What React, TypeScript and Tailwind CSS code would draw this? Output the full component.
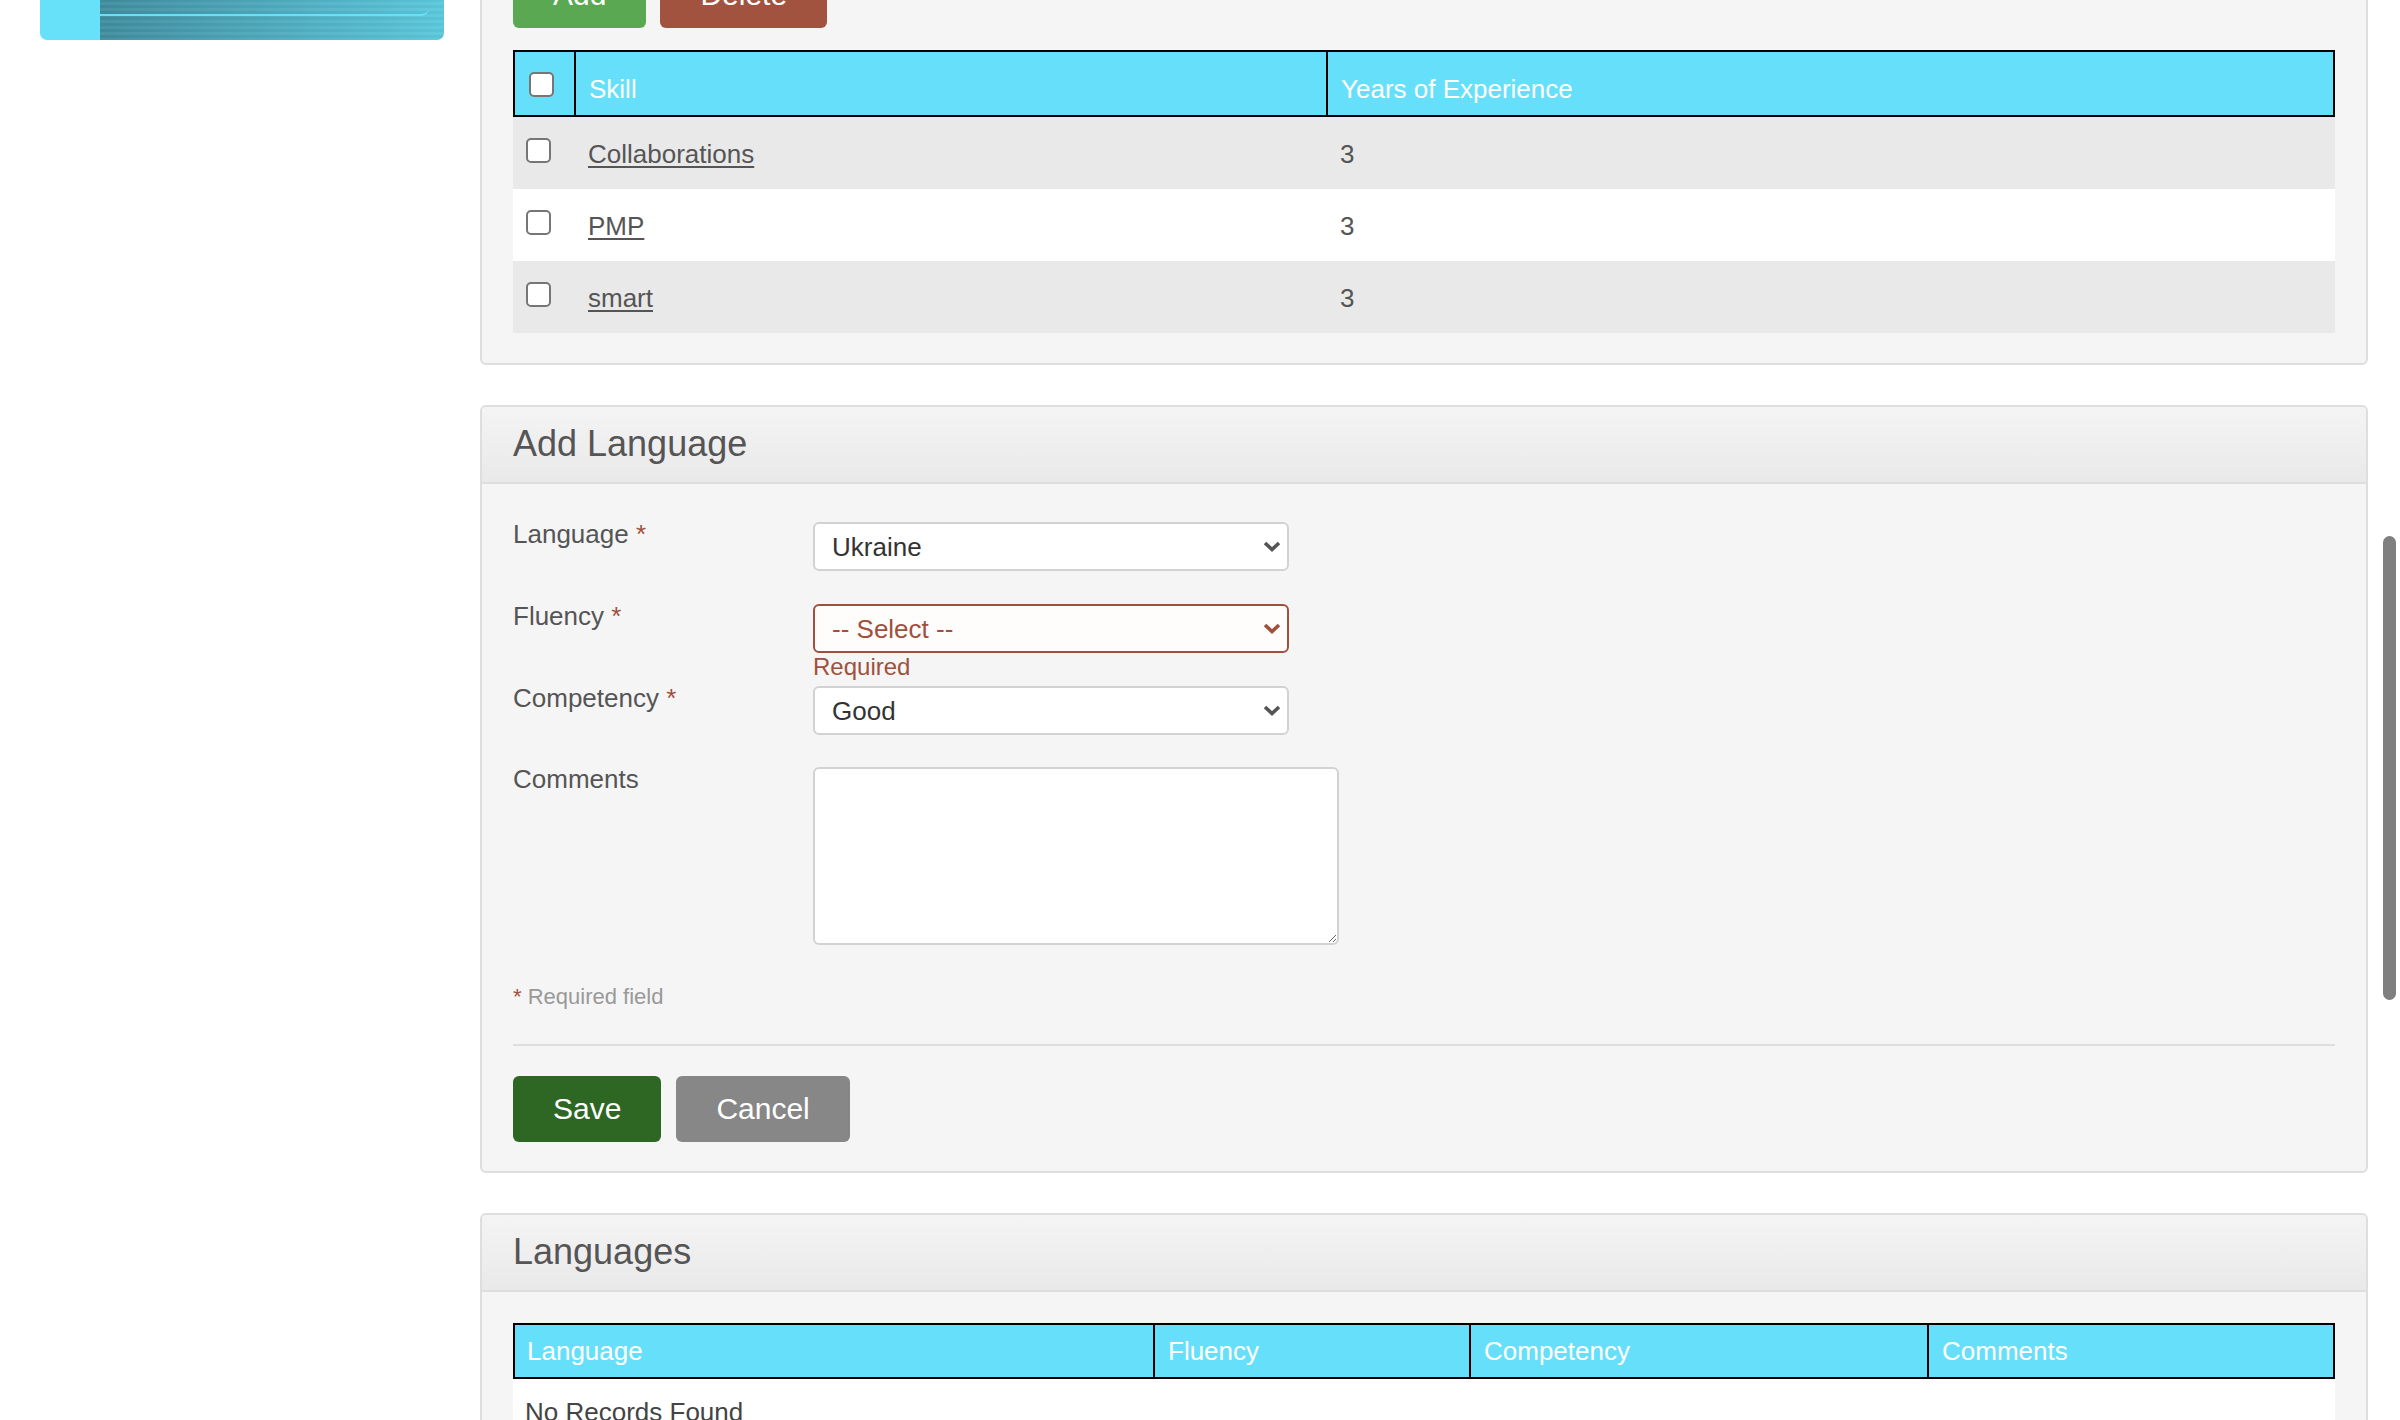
import React from "react";

const Checkbox = () => (
  <div className="w-[25px] h-[25px] bg-white border-2 border-[#767676] rounded-[5px] shrink-0" />
);

const Chevron = ({ color }: { color: string }) => (
  <svg width="18" height="11" viewBox="0 0 18 11" className="shrink-0">
    <path d="M2 2 L9 8.5 L16 2" stroke={color} strokeWidth="3.6" fill="none" strokeLinecap="butt" strokeLinejoin="miter" />
  </svg>
);

const Select = ({ value, error }: { value: string; error?: boolean }) => (
  <div
    className={
      error
        ? "w-[476px] h-[49px] flex items-center justify-between pl-[17px] pr-[6px] rounded-[6px] border-2 border-[#a0503c] bg-[#fffdfb] text-[#a0503c] text-[26px] leading-[30px]"
        : "w-[476px] h-[49px] flex items-center justify-between pl-[17px] pr-[6px] rounded-[6px] border-2 border-[#d2d2d2] bg-white text-[#333] text-[26px] leading-[30px]"
    }
  >
    <span>{value}</span>
    <Chevron color={error ? "#a0503c" : "#555555"} />
  </div>
);

const Label = ({ text, required }: { text: string; required?: boolean }) => (
  <div className="w-[300px] shrink-0 text-[26px] leading-[24px] text-[#555]">
    {text}
    {required && <span className="text-[#a0503c]"> *</span>}
  </div>
);

const skills = ["Collaborations", "PMP", "smart"];

export default function App() {
  return (
    <div className="relative w-[2400px] h-[1420px] overflow-hidden bg-white font-['Liberation_Sans',Arial,sans-serif] text-[#555]">
      <div className="flex -mt-[100px]">
        <aside className="ml-[40px] w-[404px] shrink-0">
          <div className="flex h-[140px] rounded-b-[7px] overflow-hidden">
            <div className="w-[60px] bg-[#67e0fa]" />
            <div className="flex-1 bg-[image:repeating-linear-gradient(to_bottom,rgba(255,255,255,0.05)_0px,rgba(255,255,255,0.05)_3px,rgba(0,0,0,0.02)_3px,rgba(0,0,0,0.02)_6px),linear-gradient(to_right,#3f8c9d,#5bc7db)]">
              <div className="mr-[15px] h-[116px] border-b-2 border-[#6ae0f8] rounded-br-[8px]" />
            </div>
          </div>
        </aside>

        <main className="ml-[36px] w-[1888px] shrink-0">
          {/* Skills card */}
          <section className="mt-[30px] border-2 border-[#dedede] rounded-[6px] bg-[#f5f5f5] px-[31px] pt-[30px] pb-[30px]">
            <div className="flex gap-[14px]">
              <button className="h-[66px] px-[40px] rounded-[6px] bg-[#5aa952] text-white text-[30px] leading-[30px]">Add</button>
              <button className="h-[66px] px-[40px] rounded-[6px] bg-[#a1533f] text-white text-[30px] leading-[30px]">Delete</button>
            </div>
            <div className="mt-[22px]">
              <div className="flex h-[67px] border-2 border-black bg-[#66e0fa] text-white text-[26px] leading-[30px]">
                <div className="w-[61px] border-r-2 border-black pl-[14px] pt-[20px]">
                  <Checkbox />
                </div>
                <div className="w-[752px] border-r-2 border-black pl-[13px] pt-[22px]">Skill</div>
                <div className="flex-1 pl-[13px] pt-[22px]">Years of Experience</div>
              </div>
              {skills.map((s, i) => (
                <div
                  key={s}
                  className={
                    i % 2 === 0
                      ? "flex h-[72px] bg-[#e9e9e9] text-[26px] leading-[30px] text-[#555]"
                      : "flex h-[72px] bg-white text-[26px] leading-[30px] text-[#555]"
                  }
                >
                  <div className="w-[75px] pl-[13px] pt-[21px]">
                    <Checkbox />
                  </div>
                  <div className="w-[752px] pt-[22px]">
                    <a className="underline underline-offset-[3px] decoration-[2px]">{s}</a>
                  </div>
                  <div className="flex-1 pt-[22px]">3</div>
                </div>
              ))}
            </div>
          </section>

          {/* Add Language card */}
          <section className="mt-[40px] border-2 border-[#dedede] rounded-[6px] bg-[#f5f5f5] overflow-hidden">
            <div className="h-[77px] border-b-2 border-[#dedede] bg-gradient-to-b from-[#f4f4f4] to-[#e9e9e9] pl-[31px] pt-[17px] text-[36px] leading-[40px] text-[#555]">
              Add Language
            </div>
            <div className="px-[31px] pt-[38px] pb-[29px]">
              <div className="flex">
                <Label text="Language" required />
                <Select value="Ukraine" />
              </div>
              <div className="flex mt-[33px]">
                <Label text="Fluency" required />
                <div>
                  <Select value="-- Select --" error />
                  <div className="text-[24px] leading-[28px] text-[#a0503c]">Required</div>
                </div>
              </div>
              <div className="flex mt-[5px]">
                <Label text="Competency" required />
                <Select value="Good" />
              </div>
              <div className="flex mt-[32px]">
                <Label text="Comments" />
                <textarea className="w-[526px] h-[178px] rounded-[6px] border-2 border-[#d2d2d2] bg-white outline-none" />
              </div>
              <p className="mt-[39px] text-[22px] leading-[26px] text-[#999]">
                <span className="text-[#a0503c]">*</span> Required field
              </p>
              <div className="mt-[34px] h-[2px] bg-[#dedede]" />
              <div className="mt-[30px] flex gap-[15px]">
                <button className="h-[66px] px-[40px] rounded-[6px] bg-[#2e6724] text-white text-[30px] leading-[30px]">Save</button>
                <button className="h-[66px] px-[40px] rounded-[6px] bg-[#878787] text-white text-[30px] leading-[30px]">Cancel</button>
              </div>
            </div>
          </section>

          {/* Languages card */}
          <section className="mt-[40px] border-2 border-[#dedede] rounded-[6px] bg-[#f5f5f5] overflow-hidden">
            <div className="h-[77px] border-b-2 border-[#dedede] bg-gradient-to-b from-[#f4f4f4] to-[#e9e9e9] pl-[31px] pt-[17px] text-[36px] leading-[40px] text-[#555]">
              Languages
            </div>
            <div className="px-[31px] pt-[31px] pb-[30px]">
              <div className="flex h-[56px] items-center border-2 border-black bg-[#66e0fa] text-white text-[26px] leading-[30px]">
                <div className="w-[640px] h-full flex items-center border-r-2 border-black pl-[12px]">Language</div>
                <div className="w-[316px] h-full flex items-center border-r-2 border-black pl-[13px]">Fluency</div>
                <div className="w-[458px] h-full flex items-center border-r-2 border-black pl-[13px]">Competency</div>
                <div className="flex-1 h-full flex items-center pl-[13px]">Comments</div>
              </div>
              <div className="h-[72px] bg-white pl-[12px] pt-[18px] text-[26px] leading-[30px] text-[#444]">
                No Records Found
              </div>
            </div>
          </section>
        </main>
      </div>

      <div className="absolute right-[4px] top-[536px] w-[13px] h-[464px] rounded-full bg-[#7f7f7f]" />
    </div>
  );
}
